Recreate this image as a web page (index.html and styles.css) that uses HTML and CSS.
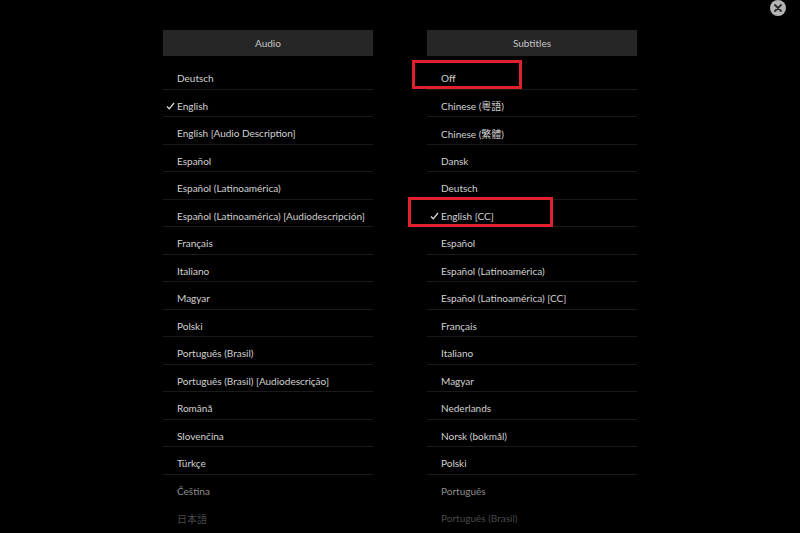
FILE: index.html
```html
<!DOCTYPE html>
<html lang="en">
<head>
	<meta charset="UTF-8">
	<title>Audio &amp; Subtitles</title>
	<link rel="stylesheet" href="styles.css">
</head>
<body>
<div class="close"><svg width="8" height="8" viewBox="0 0 8 8"><path d="M1 1L7 7M7 1L1 7" stroke="#2a2a2a" stroke-width="1.8" stroke-linecap="round"/></svg></div>
<div id="wrap">
	<div class="panel">
		<div class="head">Audio</div>
		<ul class="list">
			<li>Deutsch</li>
			<li class="on"><svg class="tick" width="9" height="8" viewBox="0 0 9 8"><path d="M1 4.5L3.3 6.8L8 1" fill="none" stroke="#ddd" stroke-width="1.3"/></svg>English</li>
			<li>English [Audio Description]</li>
			<li>Español</li>
			<li>Español (Latinoamérica)</li>
			<li>Español (Latinoamérica) [Audiodescripción]</li>
			<li>Français</li>
			<li>Italiano</li>
			<li>Magyar</li>
			<li>Polski</li>
			<li>Português (Brasil)</li>
			<li>Português (Brasil) [Audiodescrição]</li>
			<li>Română</li>
			<li>Slovenčina</li>
			<li>Türkçe</li>
			<li class="fade1">Čeština</li>
			<li class="fade2">日本語</li>
		</ul>
	</div>
	<div class="panel">
		<div class="head">Subtitles</div>
		<ul class="list">
			<li class="mark">Off<span class="box box-off"></span></li>
			<li>Chinese (粵語)</li>
			<li>Chinese (繁體)</li>
			<li>Dansk</li>
			<li>Deutsch</li>
			<li class="on mark"><svg class="tick" width="9" height="8" viewBox="0 0 9 8"><path d="M1 4.5L3.3 6.8L8 1" fill="none" stroke="#ddd" stroke-width="1.3"/></svg>English [CC]<span class="box box-cc"></span></li>
			<li>Español</li>
			<li>Español (Latinoamérica)</li>
			<li>Español (Latinoamérica) [CC]</li>
			<li>Français</li>
			<li>Italiano</li>
			<li>Magyar</li>
			<li>Nederlands</li>
			<li>Norsk (bokmål)</li>
			<li>Polski</li>
			<li class="fade1">Português</li>
			<li class="fade2">Português (Brasil)</li>
		</ul>
	</div>
</div>
</body>
</html>
```

FILE: styles.css
```css
body,ul{
	margin:0;
	padding:0;
}
body{
	background:#000;
	height:533px;
	overflow:hidden;
	font-family:Lato,"Noto Sans","Noto Sans CJK JP",sans-serif;
	position:relative;
}
.close{
	position:absolute;
	left:770px;
	top:0;
	width:16px;
	height:16px;
	border-radius:50%;
	background:#b4b4b4;
	display:flex;
	align-items:center;
	justify-content:center;
}
#wrap{
	display:flex;
	justify-content:center;
	gap:54px;
	padding-top:30px;
}
.panel{
	width:210px;
}
.head{
	height:26px;
	line-height:27px;
	background:#262626;
	color:#c4c4c4;
	font-size:10px;
	text-align:center;
	margin-bottom:6px;
}
li{
	list-style:none;
	height:27.5px;
	box-sizing:border-box;
	border-bottom:1px solid #1a1a1a;
	padding-left:14px;
	padding-top:6px;
	display:flex;
	align-items:center;
	color:#d2d2d2;
	font-size:10px;
	position:relative;
	white-space:nowrap;
}
.tick{
	position:absolute;
	left:3px;
	top:12px;
}
.fade1{
	color:#8c8c8c;
	border-bottom-color:#000;
}
.fade2{
	color:#4a4a4a;
	border-bottom-color:#000;
}
.box{
	position:absolute;
	border:3px solid #e0202a;
	box-sizing:border-box;
}
.box-off{
	left:-15px;
	top:-2px;
	width:110px;
	height:29px;
}
.box-cc{
	left:-19px;
	top:-3px;
	width:145px;
	height:30px;
}
```
